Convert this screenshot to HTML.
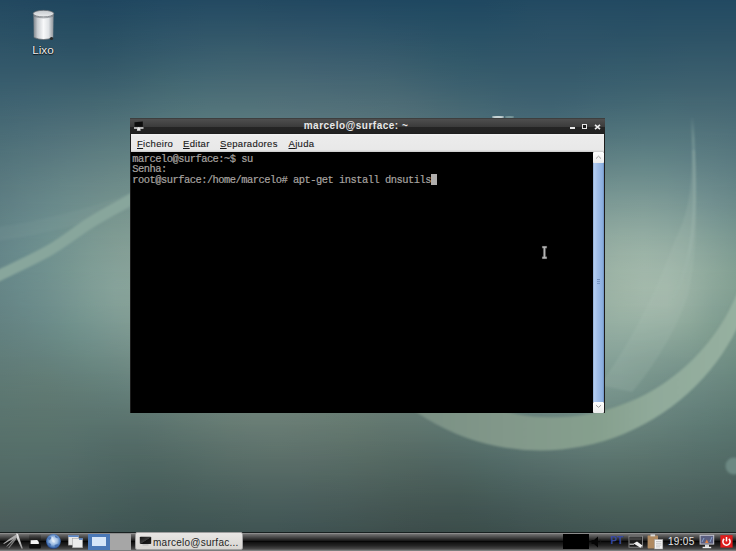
<!DOCTYPE html>
<html><head><meta charset="utf-8">
<style>
html,body{margin:0;padding:0;}
body{width:736px;height:551px;overflow:hidden;position:relative;background:#4f6e70;font-family:"Liberation Sans",sans-serif;}
.abs{position:absolute;}
#wall{position:absolute;left:0;top:0;}
#lixo{left:18px;top:42.8px;width:50px;text-align:center;color:#f0f0f0;font-size:11.7px;line-height:14px;text-shadow:0 0 1px #000,0 1px 1px rgba(0,0,0,.8);}
#win{left:130px;top:118px;width:475px;height:295px;background:#1c1c1c;}
#title{left:130px;top:118px;width:475px;height:16px;background:linear-gradient(#2e2e2e 0,#4e4e4e 1px,#444 5px,#3a3a3a 9px,#242424 9px,#222 15px,#1c1c1c 16px);}
#ttext{left:146px;top:119px;width:420px;text-align:center;color:#e8e8e8;font-weight:bold;font-size:10px;letter-spacing:0.5px;line-height:14px;}
#menubar{left:131px;top:134px;width:473px;height:18px;background:linear-gradient(#f4f4f4 0,#ececec 2px,#e8e8e8 16px,#c8c8c8 18px);}
.mi{top:137.5px;font-size:9.5px;letter-spacing:0.3px;color:#1a1a1a;line-height:12px;-webkit-text-stroke:0.12px #1a1a1a;}
.mi u{text-decoration:underline;text-underline-offset:1px;}
#term{left:130.5px;top:152px;width:462.5px;height:260.8px;background:#000;}
#tt{left:132.2px;top:153.6px;font-family:"Liberation Mono",monospace;font-size:10.4px;letter-spacing:-0.49px;line-height:10.6px;color:#a8a4a0;white-space:pre;-webkit-text-stroke:0.2px #a8a4a0;}
#sbth{left:593px;top:162px;width:11px;height:240px;background:linear-gradient(90deg,#7e9ac4 0,#b4cef2 1px,#a2bee8 40%,#8cb0e0 85%,#6e90c0 100%);}
.sbb svg{display:block}
.sbb{left:593px;width:11px;height:11px;background:linear-gradient(#ffffff,#ececec);border-radius:1px;}
#panel{left:0;top:532px;width:736px;height:19px;background:linear-gradient(#182020 0,#182020 1px,#8c8c8c 1px,#8c8c8c 2px,#6c6c6c 2.5px,#444 5.5px,#1a1a1a 8.5px,#060606 9.5px,#121212 10.5px,#242424 13.5px,#444 16.5px,#5a5a5a 17.5px,#7e7e7e 18.5px);}
#task{left:135px;top:532px;width:106px;height:16px;border:1px solid #a0a0a0;border-radius:2px;background:linear-gradient(#e8e6e4,#d8d6d2);}
#tasktext{left:153px;top:536.5px;font-size:10px;letter-spacing:0.25px;color:#262626;line-height:12px;}
#pt{left:610.5px;top:535.3px;font-size:10.2px;font-weight:bold;color:#3648a0;line-height:12px;}
#clock{left:668px;top:536px;font-size:10px;letter-spacing:0.3px;color:#e8e8e8;line-height:12px;}
</style></head>
<body>
<svg id="wall" width="736" height="551" viewBox="0 0 736 551">
  <defs>
    <filter id="bb" x="-10%" y="-10%" width="120%" height="120%" filterUnits="objectBoundingBox"><feGaussianBlur stdDeviation="10"/></filter>
    <filter id="b1" x="-20%" y="-20%" width="140%" height="140%"><feGaussianBlur stdDeviation="1.2"/></filter>
    </defs>
  <defs><linearGradient id="vg" x1="0" y1="0" x2="0" y2="1"><stop offset="0" stop-color="#fff" stop-opacity="0"/><stop offset="1" stop-color="#fff" stop-opacity="1"/></linearGradient><mask id="vm" maskContentUnits="objectBoundingBox"><rect width="1" height="1" fill="url(#vg)"/></mask><linearGradient id="r0" x1="0" y1="0" x2="736" y2="0" gradientUnits="userSpaceOnUse"><stop offset="0.0000" stop-color="#234960"/><stop offset="0.0312" stop-color="#224860"/><stop offset="0.0625" stop-color="#21475f"/><stop offset="0.0938" stop-color="#20475f"/><stop offset="0.1250" stop-color="#20465f"/><stop offset="0.1562" stop-color="#204760"/><stop offset="0.1875" stop-color="#214861"/><stop offset="0.2188" stop-color="#224962"/><stop offset="0.2500" stop-color="#234a62"/><stop offset="0.2812" stop-color="#244a62"/><stop offset="0.3125" stop-color="#244a62"/><stop offset="0.3438" stop-color="#244a62"/><stop offset="0.3750" stop-color="#234961"/><stop offset="0.4062" stop-color="#224961"/><stop offset="0.4375" stop-color="#224861"/><stop offset="0.4688" stop-color="#214861"/><stop offset="0.5000" stop-color="#214861"/><stop offset="0.5312" stop-color="#204861"/><stop offset="0.5625" stop-color="#1f4861"/><stop offset="0.5938" stop-color="#1f4861"/><stop offset="0.6250" stop-color="#1f4861"/><stop offset="0.6562" stop-color="#204861"/><stop offset="0.6875" stop-color="#214961"/><stop offset="0.7188" stop-color="#224a62"/><stop offset="0.7500" stop-color="#234a62"/><stop offset="0.7812" stop-color="#234a62"/><stop offset="0.8125" stop-color="#234a62"/><stop offset="0.8438" stop-color="#234a62"/><stop offset="0.8750" stop-color="#224a61"/><stop offset="0.9062" stop-color="#224a61"/><stop offset="0.9375" stop-color="#224a62"/><stop offset="0.9688" stop-color="#234a62"/><stop offset="1.0000" stop-color="#234a62"/></linearGradient><linearGradient id="r1" x1="0" y1="0" x2="736" y2="0" gradientUnits="userSpaceOnUse"><stop offset="0.0000" stop-color="#274d63"/><stop offset="0.0312" stop-color="#264c62"/><stop offset="0.0625" stop-color="#254b61"/><stop offset="0.0938" stop-color="#244b61"/><stop offset="0.1250" stop-color="#244a61"/><stop offset="0.1562" stop-color="#254b62"/><stop offset="0.1875" stop-color="#264d63"/><stop offset="0.2188" stop-color="#284e65"/><stop offset="0.2500" stop-color="#294f65"/><stop offset="0.2812" stop-color="#2a5066"/><stop offset="0.3125" stop-color="#2a5066"/><stop offset="0.3438" stop-color="#2a5065"/><stop offset="0.3750" stop-color="#2a4f65"/><stop offset="0.4062" stop-color="#294e65"/><stop offset="0.4375" stop-color="#294e65"/><stop offset="0.4688" stop-color="#284e65"/><stop offset="0.5000" stop-color="#274e65"/><stop offset="0.5312" stop-color="#264d64"/><stop offset="0.5625" stop-color="#254d64"/><stop offset="0.5938" stop-color="#244d63"/><stop offset="0.6250" stop-color="#244c63"/><stop offset="0.6562" stop-color="#244c63"/><stop offset="0.6875" stop-color="#254d64"/><stop offset="0.7188" stop-color="#274e64"/><stop offset="0.7500" stop-color="#284e65"/><stop offset="0.7812" stop-color="#284e65"/><stop offset="0.8125" stop-color="#274e64"/><stop offset="0.8438" stop-color="#274e64"/><stop offset="0.8750" stop-color="#274d64"/><stop offset="0.9062" stop-color="#274e64"/><stop offset="0.9375" stop-color="#274e64"/><stop offset="0.9688" stop-color="#274e64"/><stop offset="1.0000" stop-color="#274e64"/></linearGradient><linearGradient id="r2" x1="0" y1="0" x2="736" y2="0" gradientUnits="userSpaceOnUse"><stop offset="0.0000" stop-color="#2b5165"/><stop offset="0.0312" stop-color="#2a5065"/><stop offset="0.0625" stop-color="#2a4f64"/><stop offset="0.0938" stop-color="#294f63"/><stop offset="0.1250" stop-color="#294f63"/><stop offset="0.1562" stop-color="#2a5064"/><stop offset="0.1875" stop-color="#2c5266"/><stop offset="0.2188" stop-color="#2e5468"/><stop offset="0.2500" stop-color="#305569"/><stop offset="0.2812" stop-color="#315669"/><stop offset="0.3125" stop-color="#315669"/><stop offset="0.3438" stop-color="#325669"/><stop offset="0.3750" stop-color="#315569"/><stop offset="0.4062" stop-color="#315569"/><stop offset="0.4375" stop-color="#305469"/><stop offset="0.4688" stop-color="#2f5469"/><stop offset="0.5000" stop-color="#2e5468"/><stop offset="0.5312" stop-color="#2d5368"/><stop offset="0.5625" stop-color="#2c5267"/><stop offset="0.5938" stop-color="#2a5166"/><stop offset="0.6250" stop-color="#295166"/><stop offset="0.6562" stop-color="#295166"/><stop offset="0.6875" stop-color="#2a5166"/><stop offset="0.7188" stop-color="#2b5166"/><stop offset="0.7500" stop-color="#2c5267"/><stop offset="0.7812" stop-color="#2c5267"/><stop offset="0.8125" stop-color="#2c5266"/><stop offset="0.8438" stop-color="#2b5166"/><stop offset="0.8750" stop-color="#2b5266"/><stop offset="0.9062" stop-color="#2c5266"/><stop offset="0.9375" stop-color="#2c5266"/><stop offset="0.9688" stop-color="#2d5266"/><stop offset="1.0000" stop-color="#2d5266"/></linearGradient><linearGradient id="r3" x1="0" y1="0" x2="736" y2="0" gradientUnits="userSpaceOnUse"><stop offset="0.0000" stop-color="#305568"/><stop offset="0.0312" stop-color="#2f5567"/><stop offset="0.0625" stop-color="#2f5467"/><stop offset="0.0938" stop-color="#2e5366"/><stop offset="0.1250" stop-color="#2e5366"/><stop offset="0.1562" stop-color="#2f5567"/><stop offset="0.1875" stop-color="#325769"/><stop offset="0.2188" stop-color="#34596b"/><stop offset="0.2500" stop-color="#365b6c"/><stop offset="0.2812" stop-color="#385c6d"/><stop offset="0.3125" stop-color="#395d6d"/><stop offset="0.3438" stop-color="#395d6d"/><stop offset="0.3750" stop-color="#395c6d"/><stop offset="0.4062" stop-color="#395b6d"/><stop offset="0.4375" stop-color="#385b6d"/><stop offset="0.4688" stop-color="#375a6d"/><stop offset="0.5000" stop-color="#365a6c"/><stop offset="0.5312" stop-color="#35596b"/><stop offset="0.5625" stop-color="#33586a"/><stop offset="0.5938" stop-color="#305769"/><stop offset="0.6250" stop-color="#2f5668"/><stop offset="0.6562" stop-color="#2e5568"/><stop offset="0.6875" stop-color="#2f5568"/><stop offset="0.7188" stop-color="#2f5569"/><stop offset="0.7500" stop-color="#305569"/><stop offset="0.7812" stop-color="#305569"/><stop offset="0.8125" stop-color="#305569"/><stop offset="0.8438" stop-color="#305669"/><stop offset="0.8750" stop-color="#305668"/><stop offset="0.9062" stop-color="#315669"/><stop offset="0.9375" stop-color="#325769"/><stop offset="0.9688" stop-color="#325769"/><stop offset="1.0000" stop-color="#325769"/></linearGradient><linearGradient id="r4" x1="0" y1="0" x2="736" y2="0" gradientUnits="userSpaceOnUse"><stop offset="0.0000" stop-color="#34596b"/><stop offset="0.0312" stop-color="#34596b"/><stop offset="0.0625" stop-color="#34596a"/><stop offset="0.0938" stop-color="#34596a"/><stop offset="0.1250" stop-color="#345969"/><stop offset="0.1562" stop-color="#365a6a"/><stop offset="0.1875" stop-color="#385d6c"/><stop offset="0.2188" stop-color="#3b606e"/><stop offset="0.2500" stop-color="#3d6270"/><stop offset="0.2812" stop-color="#3f6371"/><stop offset="0.3125" stop-color="#406471"/><stop offset="0.3438" stop-color="#416371"/><stop offset="0.3750" stop-color="#416371"/><stop offset="0.4062" stop-color="#416271"/><stop offset="0.4375" stop-color="#406171"/><stop offset="0.4688" stop-color="#3f6170"/><stop offset="0.5000" stop-color="#3e6070"/><stop offset="0.5312" stop-color="#3d5f6f"/><stop offset="0.5625" stop-color="#3a5e6d"/><stop offset="0.5938" stop-color="#375c6c"/><stop offset="0.6250" stop-color="#355b6b"/><stop offset="0.6562" stop-color="#345a6b"/><stop offset="0.6875" stop-color="#34596b"/><stop offset="0.7188" stop-color="#34596b"/><stop offset="0.7500" stop-color="#34596b"/><stop offset="0.7812" stop-color="#34596b"/><stop offset="0.8125" stop-color="#355a6b"/><stop offset="0.8438" stop-color="#355b6c"/><stop offset="0.8750" stop-color="#365b6b"/><stop offset="0.9062" stop-color="#375b6c"/><stop offset="0.9375" stop-color="#385c6c"/><stop offset="0.9688" stop-color="#385c6c"/><stop offset="1.0000" stop-color="#385b6c"/></linearGradient><linearGradient id="r5" x1="0" y1="0" x2="736" y2="0" gradientUnits="userSpaceOnUse"><stop offset="0.0000" stop-color="#395e6e"/><stop offset="0.0312" stop-color="#3a5e6e"/><stop offset="0.0625" stop-color="#3b5f6e"/><stop offset="0.0938" stop-color="#3b5f6e"/><stop offset="0.1250" stop-color="#3c606e"/><stop offset="0.1562" stop-color="#3d616f"/><stop offset="0.1875" stop-color="#406470"/><stop offset="0.2188" stop-color="#436772"/><stop offset="0.2500" stop-color="#456974"/><stop offset="0.2812" stop-color="#476a75"/><stop offset="0.3125" stop-color="#486a75"/><stop offset="0.3438" stop-color="#496a75"/><stop offset="0.3750" stop-color="#496a75"/><stop offset="0.4062" stop-color="#496975"/><stop offset="0.4375" stop-color="#486875"/><stop offset="0.4688" stop-color="#476774"/><stop offset="0.5000" stop-color="#466773"/><stop offset="0.5312" stop-color="#456672"/><stop offset="0.5625" stop-color="#426471"/><stop offset="0.5938" stop-color="#3f6270"/><stop offset="0.6250" stop-color="#3c606f"/><stop offset="0.6562" stop-color="#3b5f6e"/><stop offset="0.6875" stop-color="#395e6e"/><stop offset="0.7188" stop-color="#395d6e"/><stop offset="0.7500" stop-color="#395d6e"/><stop offset="0.7812" stop-color="#395e6e"/><stop offset="0.8125" stop-color="#3a5f6f"/><stop offset="0.8438" stop-color="#3b606f"/><stop offset="0.8750" stop-color="#3c616f"/><stop offset="0.9062" stop-color="#3d616f"/><stop offset="0.9375" stop-color="#3e616f"/><stop offset="0.9688" stop-color="#3e616f"/><stop offset="1.0000" stop-color="#3e616f"/></linearGradient><linearGradient id="r6" x1="0" y1="0" x2="736" y2="0" gradientUnits="userSpaceOnUse"><stop offset="0.0000" stop-color="#3f6371"/><stop offset="0.0312" stop-color="#406472"/><stop offset="0.0625" stop-color="#416572"/><stop offset="0.0938" stop-color="#436672"/><stop offset="0.1250" stop-color="#446772"/><stop offset="0.1562" stop-color="#466973"/><stop offset="0.1875" stop-color="#486b75"/><stop offset="0.2188" stop-color="#4b6e77"/><stop offset="0.2500" stop-color="#4d7078"/><stop offset="0.2812" stop-color="#4f7179"/><stop offset="0.3125" stop-color="#507179"/><stop offset="0.3438" stop-color="#507179"/><stop offset="0.3750" stop-color="#517079"/><stop offset="0.4062" stop-color="#506f79"/><stop offset="0.4375" stop-color="#506f78"/><stop offset="0.4688" stop-color="#4f6e78"/><stop offset="0.5000" stop-color="#4e6d77"/><stop offset="0.5312" stop-color="#4d6c76"/><stop offset="0.5625" stop-color="#4b6a75"/><stop offset="0.5938" stop-color="#476873"/><stop offset="0.6250" stop-color="#446672"/><stop offset="0.6562" stop-color="#426572"/><stop offset="0.6875" stop-color="#406371"/><stop offset="0.7188" stop-color="#3f6271"/><stop offset="0.7500" stop-color="#3e6271"/><stop offset="0.7812" stop-color="#3f6372"/><stop offset="0.8125" stop-color="#416573"/><stop offset="0.8438" stop-color="#426673"/><stop offset="0.8750" stop-color="#436773"/><stop offset="0.9062" stop-color="#446874"/><stop offset="0.9375" stop-color="#456773"/><stop offset="0.9688" stop-color="#456773"/><stop offset="1.0000" stop-color="#446673"/></linearGradient><linearGradient id="r7" x1="0" y1="0" x2="736" y2="0" gradientUnits="userSpaceOnUse"><stop offset="0.0000" stop-color="#456874"/><stop offset="0.0312" stop-color="#476975"/><stop offset="0.0625" stop-color="#496b76"/><stop offset="0.0938" stop-color="#4b6c77"/><stop offset="0.1250" stop-color="#4c6e77"/><stop offset="0.1562" stop-color="#4e7078"/><stop offset="0.1875" stop-color="#517279"/><stop offset="0.2188" stop-color="#53757b"/><stop offset="0.2500" stop-color="#55777c"/><stop offset="0.2812" stop-color="#57787d"/><stop offset="0.3125" stop-color="#57787d"/><stop offset="0.3438" stop-color="#58787d"/><stop offset="0.3750" stop-color="#58777d"/><stop offset="0.4062" stop-color="#58767d"/><stop offset="0.4375" stop-color="#57757c"/><stop offset="0.4688" stop-color="#57747b"/><stop offset="0.5000" stop-color="#56737a"/><stop offset="0.5312" stop-color="#547279"/><stop offset="0.5625" stop-color="#527078"/><stop offset="0.5938" stop-color="#4f6e77"/><stop offset="0.6250" stop-color="#4c6c76"/><stop offset="0.6562" stop-color="#496b76"/><stop offset="0.6875" stop-color="#476975"/><stop offset="0.7188" stop-color="#466875"/><stop offset="0.7500" stop-color="#456875"/><stop offset="0.7812" stop-color="#476a76"/><stop offset="0.8125" stop-color="#496c77"/><stop offset="0.8438" stop-color="#4a6e78"/><stop offset="0.8750" stop-color="#4b6f78"/><stop offset="0.9062" stop-color="#4c6f78"/><stop offset="0.9375" stop-color="#4c6e78"/><stop offset="0.9688" stop-color="#4c6d77"/><stop offset="1.0000" stop-color="#4a6c77"/></linearGradient><linearGradient id="r8" x1="0" y1="0" x2="736" y2="0" gradientUnits="userSpaceOnUse"><stop offset="0.0000" stop-color="#4b6d77"/><stop offset="0.0312" stop-color="#4d6f79"/><stop offset="0.0625" stop-color="#50717a"/><stop offset="0.0938" stop-color="#53737b"/><stop offset="0.1250" stop-color="#55757c"/><stop offset="0.1562" stop-color="#57787d"/><stop offset="0.1875" stop-color="#597a7e"/><stop offset="0.2188" stop-color="#5b7c7f"/><stop offset="0.2500" stop-color="#5d7e80"/><stop offset="0.2812" stop-color="#5e7f81"/><stop offset="0.3125" stop-color="#5f7f81"/><stop offset="0.3438" stop-color="#5f7e81"/><stop offset="0.3750" stop-color="#5f7d81"/><stop offset="0.4062" stop-color="#5f7c80"/><stop offset="0.4375" stop-color="#5f7b7f"/><stop offset="0.4688" stop-color="#5e7a7f"/><stop offset="0.5000" stop-color="#5d797e"/><stop offset="0.5312" stop-color="#5b787d"/><stop offset="0.5625" stop-color="#59767c"/><stop offset="0.5938" stop-color="#56747b"/><stop offset="0.6250" stop-color="#54737a"/><stop offset="0.6562" stop-color="#51717a"/><stop offset="0.6875" stop-color="#50707a"/><stop offset="0.7188" stop-color="#4e707a"/><stop offset="0.7500" stop-color="#4e707a"/><stop offset="0.7812" stop-color="#50727b"/><stop offset="0.8125" stop-color="#52747c"/><stop offset="0.8438" stop-color="#53767d"/><stop offset="0.8750" stop-color="#54777e"/><stop offset="0.9062" stop-color="#54777e"/><stop offset="0.9375" stop-color="#54767d"/><stop offset="0.9688" stop-color="#53747c"/><stop offset="1.0000" stop-color="#51727b"/></linearGradient><linearGradient id="r9" x1="0" y1="0" x2="736" y2="0" gradientUnits="userSpaceOnUse"><stop offset="0.0000" stop-color="#50727a"/><stop offset="0.0312" stop-color="#54757c"/><stop offset="0.0625" stop-color="#57777e"/><stop offset="0.0938" stop-color="#5a7a80"/><stop offset="0.1250" stop-color="#5d7d81"/><stop offset="0.1562" stop-color="#5f7f82"/><stop offset="0.1875" stop-color="#618183"/><stop offset="0.2188" stop-color="#638383"/><stop offset="0.2500" stop-color="#658484"/><stop offset="0.2812" stop-color="#668585"/><stop offset="0.3125" stop-color="#668585"/><stop offset="0.3438" stop-color="#668485"/><stop offset="0.3750" stop-color="#668384"/><stop offset="0.4062" stop-color="#668283"/><stop offset="0.4375" stop-color="#658083"/><stop offset="0.4688" stop-color="#647f82"/><stop offset="0.5000" stop-color="#637e81"/><stop offset="0.5312" stop-color="#627d80"/><stop offset="0.5625" stop-color="#607c7f"/><stop offset="0.5938" stop-color="#5d7a7f"/><stop offset="0.6250" stop-color="#5b797e"/><stop offset="0.6562" stop-color="#59787e"/><stop offset="0.6875" stop-color="#58777e"/><stop offset="0.7188" stop-color="#58787f"/><stop offset="0.7500" stop-color="#587980"/><stop offset="0.7812" stop-color="#5a7b81"/><stop offset="0.8125" stop-color="#5c7d82"/><stop offset="0.8438" stop-color="#5d7f83"/><stop offset="0.8750" stop-color="#5e8084"/><stop offset="0.9062" stop-color="#5d7f83"/><stop offset="0.9375" stop-color="#5c7d83"/><stop offset="0.9688" stop-color="#5a7b81"/><stop offset="1.0000" stop-color="#57787f"/></linearGradient><linearGradient id="r10" x1="0" y1="0" x2="736" y2="0" gradientUnits="userSpaceOnUse"><stop offset="0.0000" stop-color="#56767d"/><stop offset="0.0312" stop-color="#597a80"/><stop offset="0.0625" stop-color="#5d7d82"/><stop offset="0.0938" stop-color="#618184"/><stop offset="0.1250" stop-color="#648385"/><stop offset="0.1562" stop-color="#678686"/><stop offset="0.1875" stop-color="#698887"/><stop offset="0.2188" stop-color="#6b8988"/><stop offset="0.2500" stop-color="#6c8a88"/><stop offset="0.2812" stop-color="#6d8b88"/><stop offset="0.3125" stop-color="#6d8a88"/><stop offset="0.3438" stop-color="#6d8988"/><stop offset="0.3750" stop-color="#6d8887"/><stop offset="0.4062" stop-color="#6c8786"/><stop offset="0.4375" stop-color="#6b8686"/><stop offset="0.4688" stop-color="#6a8485"/><stop offset="0.5000" stop-color="#698384"/><stop offset="0.5312" stop-color="#678283"/><stop offset="0.5625" stop-color="#668183"/><stop offset="0.5938" stop-color="#648082"/><stop offset="0.6250" stop-color="#627f82"/><stop offset="0.6562" stop-color="#617f82"/><stop offset="0.6875" stop-color="#617f83"/><stop offset="0.7188" stop-color="#618084"/><stop offset="0.7500" stop-color="#628185"/><stop offset="0.7812" stop-color="#648487"/><stop offset="0.8125" stop-color="#668688"/><stop offset="0.8438" stop-color="#688889"/><stop offset="0.8750" stop-color="#68898a"/><stop offset="0.9062" stop-color="#67888a"/><stop offset="0.9375" stop-color="#658588"/><stop offset="0.9688" stop-color="#628286"/><stop offset="1.0000" stop-color="#5e7e83"/></linearGradient><linearGradient id="r11" x1="0" y1="0" x2="736" y2="0" gradientUnits="userSpaceOnUse"><stop offset="0.0000" stop-color="#5a7a80"/><stop offset="0.0312" stop-color="#5f7f83"/><stop offset="0.0625" stop-color="#638386"/><stop offset="0.0938" stop-color="#678788"/><stop offset="0.1250" stop-color="#6b8989"/><stop offset="0.1562" stop-color="#6e8c8a"/><stop offset="0.1875" stop-color="#708e8b"/><stop offset="0.2188" stop-color="#728f8b"/><stop offset="0.2500" stop-color="#73908c"/><stop offset="0.2812" stop-color="#73908c"/><stop offset="0.3125" stop-color="#738f8b"/><stop offset="0.3438" stop-color="#738e8b"/><stop offset="0.3750" stop-color="#728d8a"/><stop offset="0.4062" stop-color="#718c89"/><stop offset="0.4375" stop-color="#708a88"/><stop offset="0.4688" stop-color="#6f8987"/><stop offset="0.5000" stop-color="#6e8887"/><stop offset="0.5312" stop-color="#6d8786"/><stop offset="0.5625" stop-color="#6b8686"/><stop offset="0.5938" stop-color="#6a8585"/><stop offset="0.6250" stop-color="#698586"/><stop offset="0.6562" stop-color="#698586"/><stop offset="0.6875" stop-color="#698687"/><stop offset="0.7188" stop-color="#6a8789"/><stop offset="0.7500" stop-color="#6c8a8b"/><stop offset="0.7812" stop-color="#6f8d8d"/><stop offset="0.8125" stop-color="#71908f"/><stop offset="0.8438" stop-color="#739290"/><stop offset="0.8750" stop-color="#739290"/><stop offset="0.9062" stop-color="#729190"/><stop offset="0.9375" stop-color="#6e8d8e"/><stop offset="0.9688" stop-color="#6a898b"/><stop offset="1.0000" stop-color="#658587"/></linearGradient><linearGradient id="r12" x1="0" y1="0" x2="736" y2="0" gradientUnits="userSpaceOnUse"><stop offset="0.0000" stop-color="#5e7e83"/><stop offset="0.0312" stop-color="#638387"/><stop offset="0.0625" stop-color="#67888a"/><stop offset="0.0938" stop-color="#6c8c8c"/><stop offset="0.1250" stop-color="#708f8d"/><stop offset="0.1562" stop-color="#74928d"/><stop offset="0.1875" stop-color="#77948e"/><stop offset="0.2188" stop-color="#78958f"/><stop offset="0.2500" stop-color="#79958f"/><stop offset="0.2812" stop-color="#79958f"/><stop offset="0.3125" stop-color="#79948e"/><stop offset="0.3438" stop-color="#78928d"/><stop offset="0.3750" stop-color="#77918c"/><stop offset="0.4062" stop-color="#76908b"/><stop offset="0.4375" stop-color="#758e8a"/><stop offset="0.4688" stop-color="#748d89"/><stop offset="0.5000" stop-color="#738c89"/><stop offset="0.5312" stop-color="#718b88"/><stop offset="0.5625" stop-color="#708a88"/><stop offset="0.5938" stop-color="#708a88"/><stop offset="0.6250" stop-color="#6f8a89"/><stop offset="0.6562" stop-color="#6f8b8a"/><stop offset="0.6875" stop-color="#718c8b"/><stop offset="0.7188" stop-color="#738f8d"/><stop offset="0.7500" stop-color="#759290"/><stop offset="0.7812" stop-color="#799592"/><stop offset="0.8125" stop-color="#7c9995"/><stop offset="0.8438" stop-color="#7e9b96"/><stop offset="0.8750" stop-color="#7f9c97"/><stop offset="0.9062" stop-color="#7d9a96"/><stop offset="0.9375" stop-color="#789693"/><stop offset="0.9688" stop-color="#729090"/><stop offset="1.0000" stop-color="#6c8b8b"/></linearGradient><linearGradient id="r13" x1="0" y1="0" x2="736" y2="0" gradientUnits="userSpaceOnUse"><stop offset="0.0000" stop-color="#618285"/><stop offset="0.0312" stop-color="#66878a"/><stop offset="0.0625" stop-color="#6b8c8d"/><stop offset="0.0938" stop-color="#70908e"/><stop offset="0.1250" stop-color="#76948f"/><stop offset="0.1562" stop-color="#7a9790"/><stop offset="0.1875" stop-color="#7d9891"/><stop offset="0.2188" stop-color="#7e9992"/><stop offset="0.2500" stop-color="#7f9992"/><stop offset="0.2812" stop-color="#7e9991"/><stop offset="0.3125" stop-color="#7e9790"/><stop offset="0.3438" stop-color="#7d968f"/><stop offset="0.3750" stop-color="#7b948e"/><stop offset="0.4062" stop-color="#7a938d"/><stop offset="0.4375" stop-color="#79918c"/><stop offset="0.4688" stop-color="#78908b"/><stop offset="0.5000" stop-color="#778f8a"/><stop offset="0.5312" stop-color="#768e8a"/><stop offset="0.5625" stop-color="#758e8a"/><stop offset="0.5938" stop-color="#748e8b"/><stop offset="0.6250" stop-color="#758f8c"/><stop offset="0.6562" stop-color="#76908d"/><stop offset="0.6875" stop-color="#77928f"/><stop offset="0.7188" stop-color="#7a9591"/><stop offset="0.7500" stop-color="#7e9994"/><stop offset="0.7812" stop-color="#829d97"/><stop offset="0.8125" stop-color="#86a19a"/><stop offset="0.8438" stop-color="#89a49c"/><stop offset="0.8750" stop-color="#8aa59d"/><stop offset="0.9062" stop-color="#87a39c"/><stop offset="0.9375" stop-color="#829e98"/><stop offset="0.9688" stop-color="#7a9894"/><stop offset="1.0000" stop-color="#73928e"/></linearGradient><linearGradient id="r14" x1="0" y1="0" x2="736" y2="0" gradientUnits="userSpaceOnUse"><stop offset="0.0000" stop-color="#648488"/><stop offset="0.0312" stop-color="#698a8c"/><stop offset="0.0625" stop-color="#6e908f"/><stop offset="0.0938" stop-color="#749490"/><stop offset="0.1250" stop-color="#7a9892"/><stop offset="0.1562" stop-color="#7f9b93"/><stop offset="0.1875" stop-color="#829d94"/><stop offset="0.2188" stop-color="#839d94"/><stop offset="0.2500" stop-color="#839d94"/><stop offset="0.2812" stop-color="#829c93"/><stop offset="0.3125" stop-color="#819a92"/><stop offset="0.3438" stop-color="#809991"/><stop offset="0.3750" stop-color="#7f978f"/><stop offset="0.4062" stop-color="#7d958e"/><stop offset="0.4375" stop-color="#7c948d"/><stop offset="0.4688" stop-color="#7b938c"/><stop offset="0.5000" stop-color="#7a928c"/><stop offset="0.5312" stop-color="#79918c"/><stop offset="0.5625" stop-color="#78918c"/><stop offset="0.5938" stop-color="#78918d"/><stop offset="0.6250" stop-color="#79928e"/><stop offset="0.6562" stop-color="#7a9490"/><stop offset="0.6875" stop-color="#7d9792"/><stop offset="0.7188" stop-color="#809b95"/><stop offset="0.7500" stop-color="#859f98"/><stop offset="0.7812" stop-color="#8aa39b"/><stop offset="0.8125" stop-color="#8fa89f"/><stop offset="0.8438" stop-color="#93aca1"/><stop offset="0.8750" stop-color="#94ada3"/><stop offset="0.9062" stop-color="#91aba1"/><stop offset="0.9375" stop-color="#8ba69d"/><stop offset="0.9688" stop-color="#829f97"/><stop offset="1.0000" stop-color="#7a9891"/></linearGradient><linearGradient id="r15" x1="0" y1="0" x2="736" y2="0" gradientUnits="userSpaceOnUse"><stop offset="0.0000" stop-color="#658689"/><stop offset="0.0312" stop-color="#6a8c8d"/><stop offset="0.0625" stop-color="#70918f"/><stop offset="0.0938" stop-color="#769591"/><stop offset="0.1250" stop-color="#7d9b94"/><stop offset="0.1562" stop-color="#839e96"/><stop offset="0.1875" stop-color="#86a097"/><stop offset="0.2188" stop-color="#86a097"/><stop offset="0.2500" stop-color="#869f96"/><stop offset="0.2812" stop-color="#859e94"/><stop offset="0.3125" stop-color="#849c93"/><stop offset="0.3438" stop-color="#839b91"/><stop offset="0.3750" stop-color="#819990"/><stop offset="0.4062" stop-color="#80978f"/><stop offset="0.4375" stop-color="#7e968e"/><stop offset="0.4688" stop-color="#7d948d"/><stop offset="0.5000" stop-color="#7c938c"/><stop offset="0.5312" stop-color="#7b938c"/><stop offset="0.5625" stop-color="#7b938d"/><stop offset="0.5938" stop-color="#7b948e"/><stop offset="0.6250" stop-color="#7c958f"/><stop offset="0.6562" stop-color="#7e9891"/><stop offset="0.6875" stop-color="#819b94"/><stop offset="0.7188" stop-color="#859f97"/><stop offset="0.7500" stop-color="#8aa39b"/><stop offset="0.7812" stop-color="#8fa89e"/><stop offset="0.8125" stop-color="#95ada2"/><stop offset="0.8438" stop-color="#9ab1a5"/><stop offset="0.8750" stop-color="#9cb4a7"/><stop offset="0.9062" stop-color="#9ab1a6"/><stop offset="0.9375" stop-color="#92aca1"/><stop offset="0.9688" stop-color="#89a49a"/><stop offset="1.0000" stop-color="#7f9d93"/></linearGradient><linearGradient id="r16" x1="0" y1="0" x2="736" y2="0" gradientUnits="userSpaceOnUse"><stop offset="0.0000" stop-color="#668688"/><stop offset="0.0312" stop-color="#6b8c8c"/><stop offset="0.0625" stop-color="#70918f"/><stop offset="0.0938" stop-color="#779791"/><stop offset="0.1250" stop-color="#7f9d96"/><stop offset="0.1562" stop-color="#85a199"/><stop offset="0.1875" stop-color="#88a299"/><stop offset="0.2188" stop-color="#88a298"/><stop offset="0.2500" stop-color="#88a196"/><stop offset="0.2812" stop-color="#879f95"/><stop offset="0.3125" stop-color="#859d93"/><stop offset="0.3438" stop-color="#849b91"/><stop offset="0.3750" stop-color="#839a90"/><stop offset="0.4062" stop-color="#81988f"/><stop offset="0.4375" stop-color="#80968e"/><stop offset="0.4688" stop-color="#7e958d"/><stop offset="0.5000" stop-color="#7d948c"/><stop offset="0.5312" stop-color="#7d948c"/><stop offset="0.5625" stop-color="#7c948d"/><stop offset="0.5938" stop-color="#7d958e"/><stop offset="0.6250" stop-color="#7e9790"/><stop offset="0.6562" stop-color="#819a92"/><stop offset="0.6875" stop-color="#849d95"/><stop offset="0.7188" stop-color="#88a199"/><stop offset="0.7500" stop-color="#8da69c"/><stop offset="0.7812" stop-color="#93aba0"/><stop offset="0.8125" stop-color="#99b0a4"/><stop offset="0.8438" stop-color="#9eb5a7"/><stop offset="0.8750" stop-color="#a1b7aa"/><stop offset="0.9062" stop-color="#9fb6a9"/><stop offset="0.9375" stop-color="#97b0a3"/><stop offset="0.9688" stop-color="#8da89b"/><stop offset="1.0000" stop-color="#83a093"/></linearGradient><linearGradient id="r17" x1="0" y1="0" x2="736" y2="0" gradientUnits="userSpaceOnUse"><stop offset="0.0000" stop-color="#668687"/><stop offset="0.0312" stop-color="#6a8b8b"/><stop offset="0.0625" stop-color="#70908e"/><stop offset="0.0938" stop-color="#779692"/><stop offset="0.1250" stop-color="#7f9d96"/><stop offset="0.1562" stop-color="#86a29a"/><stop offset="0.1875" stop-color="#88a399"/><stop offset="0.2188" stop-color="#88a298"/><stop offset="0.2500" stop-color="#88a096"/><stop offset="0.2812" stop-color="#879f94"/><stop offset="0.3125" stop-color="#869d92"/><stop offset="0.3438" stop-color="#849b91"/><stop offset="0.3750" stop-color="#83998f"/><stop offset="0.4062" stop-color="#82988e"/><stop offset="0.4375" stop-color="#80968d"/><stop offset="0.4688" stop-color="#7f958c"/><stop offset="0.5000" stop-color="#7e948c"/><stop offset="0.5312" stop-color="#7d948c"/><stop offset="0.5625" stop-color="#7d958d"/><stop offset="0.5938" stop-color="#7e968e"/><stop offset="0.6250" stop-color="#7f9890"/><stop offset="0.6562" stop-color="#829a93"/><stop offset="0.6875" stop-color="#859e96"/><stop offset="0.7188" stop-color="#8aa299"/><stop offset="0.7500" stop-color="#8fa79d"/><stop offset="0.7812" stop-color="#94aca1"/><stop offset="0.8125" stop-color="#9ab1a4"/><stop offset="0.8438" stop-color="#9fb5a7"/><stop offset="0.8750" stop-color="#a3b9ab"/><stop offset="0.9062" stop-color="#a2b8aa"/><stop offset="0.9375" stop-color="#98b0a3"/><stop offset="0.9688" stop-color="#8ca79a"/><stop offset="1.0000" stop-color="#83a092"/></linearGradient><linearGradient id="r18" x1="0" y1="0" x2="736" y2="0" gradientUnits="userSpaceOnUse"><stop offset="0.0000" stop-color="#658485"/><stop offset="0.0312" stop-color="#698989"/><stop offset="0.0625" stop-color="#6e8e8c"/><stop offset="0.0938" stop-color="#759490"/><stop offset="0.1250" stop-color="#7c9b94"/><stop offset="0.1562" stop-color="#839f97"/><stop offset="0.1875" stop-color="#86a097"/><stop offset="0.2188" stop-color="#86a096"/><stop offset="0.2500" stop-color="#869e94"/><stop offset="0.2812" stop-color="#869d93"/><stop offset="0.3125" stop-color="#859c91"/><stop offset="0.3438" stop-color="#849a8f"/><stop offset="0.3750" stop-color="#83988e"/><stop offset="0.4062" stop-color="#81978d"/><stop offset="0.4375" stop-color="#80968b"/><stop offset="0.4688" stop-color="#7e948b"/><stop offset="0.5000" stop-color="#7d948a"/><stop offset="0.5312" stop-color="#7d938b"/><stop offset="0.5625" stop-color="#7c948b"/><stop offset="0.5938" stop-color="#7d958d"/><stop offset="0.6250" stop-color="#7f978f"/><stop offset="0.6562" stop-color="#819a92"/><stop offset="0.6875" stop-color="#859e95"/><stop offset="0.7188" stop-color="#89a299"/><stop offset="0.7500" stop-color="#8ea79c"/><stop offset="0.7812" stop-color="#93aca0"/><stop offset="0.8125" stop-color="#98b0a3"/><stop offset="0.8438" stop-color="#9db4a6"/><stop offset="0.8750" stop-color="#a0b6a9"/><stop offset="0.9062" stop-color="#9fb5a8"/><stop offset="0.9375" stop-color="#94ada0"/><stop offset="0.9688" stop-color="#87a397"/><stop offset="1.0000" stop-color="#7f9c90"/></linearGradient><linearGradient id="r19" x1="0" y1="0" x2="736" y2="0" gradientUnits="userSpaceOnUse"><stop offset="0.0000" stop-color="#648282"/><stop offset="0.0312" stop-color="#678685"/><stop offset="0.0625" stop-color="#6b8b89"/><stop offset="0.0938" stop-color="#70918c"/><stop offset="0.1250" stop-color="#779690"/><stop offset="0.1562" stop-color="#7d9a93"/><stop offset="0.1875" stop-color="#819c93"/><stop offset="0.2188" stop-color="#829c93"/><stop offset="0.2500" stop-color="#839b91"/><stop offset="0.2812" stop-color="#839a90"/><stop offset="0.3125" stop-color="#83998e"/><stop offset="0.3438" stop-color="#82988d"/><stop offset="0.3750" stop-color="#81968c"/><stop offset="0.4062" stop-color="#80958a"/><stop offset="0.4375" stop-color="#7e9489"/><stop offset="0.4688" stop-color="#7d9389"/><stop offset="0.5000" stop-color="#7c9288"/><stop offset="0.5312" stop-color="#7b9289"/><stop offset="0.5625" stop-color="#7b9289"/><stop offset="0.5938" stop-color="#7b938b"/><stop offset="0.6250" stop-color="#7d958d"/><stop offset="0.6562" stop-color="#7f9890"/><stop offset="0.6875" stop-color="#839c93"/><stop offset="0.7188" stop-color="#87a097"/><stop offset="0.7500" stop-color="#8ca59b"/><stop offset="0.7812" stop-color="#90a99e"/><stop offset="0.8125" stop-color="#94ada1"/><stop offset="0.8438" stop-color="#97b0a3"/><stop offset="0.8750" stop-color="#98b1a4"/><stop offset="0.9062" stop-color="#95aea1"/><stop offset="0.9375" stop-color="#8da89a"/><stop offset="0.9688" stop-color="#829f92"/><stop offset="1.0000" stop-color="#7a988c"/></linearGradient><linearGradient id="r20" x1="0" y1="0" x2="736" y2="0" gradientUnits="userSpaceOnUse"><stop offset="0.0000" stop-color="#62807e"/><stop offset="0.0312" stop-color="#658381"/><stop offset="0.0625" stop-color="#688784"/><stop offset="0.0938" stop-color="#6c8c87"/><stop offset="0.1250" stop-color="#71908b"/><stop offset="0.1562" stop-color="#77938d"/><stop offset="0.1875" stop-color="#7a968e"/><stop offset="0.2188" stop-color="#7d968e"/><stop offset="0.2500" stop-color="#7e968d"/><stop offset="0.2812" stop-color="#7f968c"/><stop offset="0.3125" stop-color="#80968b"/><stop offset="0.3438" stop-color="#7f958a"/><stop offset="0.3750" stop-color="#7f9489"/><stop offset="0.4062" stop-color="#7e9288"/><stop offset="0.4375" stop-color="#7c9187"/><stop offset="0.4688" stop-color="#7b9086"/><stop offset="0.5000" stop-color="#7a8f86"/><stop offset="0.5312" stop-color="#798f86"/><stop offset="0.5625" stop-color="#789087"/><stop offset="0.5938" stop-color="#799188"/><stop offset="0.6250" stop-color="#7a938a"/><stop offset="0.6562" stop-color="#7c968d"/><stop offset="0.6875" stop-color="#809991"/><stop offset="0.7188" stop-color="#849d94"/><stop offset="0.7500" stop-color="#88a198"/><stop offset="0.7812" stop-color="#8ba59b"/><stop offset="0.8125" stop-color="#8ea89d"/><stop offset="0.8438" stop-color="#8fa99e"/><stop offset="0.8750" stop-color="#8da89c"/><stop offset="0.9062" stop-color="#8aa599"/><stop offset="0.9375" stop-color="#84a094"/><stop offset="0.9688" stop-color="#7d9a8d"/><stop offset="1.0000" stop-color="#759388"/></linearGradient><linearGradient id="r21" x1="0" y1="0" x2="736" y2="0" gradientUnits="userSpaceOnUse"><stop offset="0.0000" stop-color="#617d7a"/><stop offset="0.0312" stop-color="#637f7c"/><stop offset="0.0625" stop-color="#65827e"/><stop offset="0.0938" stop-color="#688681"/><stop offset="0.1250" stop-color="#6c8a84"/><stop offset="0.1562" stop-color="#708c86"/><stop offset="0.1875" stop-color="#748f87"/><stop offset="0.2188" stop-color="#779088"/><stop offset="0.2500" stop-color="#799188"/><stop offset="0.2812" stop-color="#7b9188"/><stop offset="0.3125" stop-color="#7c9187"/><stop offset="0.3438" stop-color="#7c9187"/><stop offset="0.3750" stop-color="#7c9086"/><stop offset="0.4062" stop-color="#7b8f85"/><stop offset="0.4375" stop-color="#798e83"/><stop offset="0.4688" stop-color="#788d83"/><stop offset="0.5000" stop-color="#768c82"/><stop offset="0.5312" stop-color="#758c82"/><stop offset="0.5625" stop-color="#758c83"/><stop offset="0.5938" stop-color="#758d85"/><stop offset="0.6250" stop-color="#768f87"/><stop offset="0.6562" stop-color="#78928a"/><stop offset="0.6875" stop-color="#7b958d"/><stop offset="0.7188" stop-color="#7f9991"/><stop offset="0.7500" stop-color="#839d94"/><stop offset="0.7812" stop-color="#86a097"/><stop offset="0.8125" stop-color="#87a298"/><stop offset="0.8438" stop-color="#86a298"/><stop offset="0.8750" stop-color="#839e94"/><stop offset="0.9062" stop-color="#7f9b91"/><stop offset="0.9375" stop-color="#7c988e"/><stop offset="0.9688" stop-color="#769389"/><stop offset="1.0000" stop-color="#708e83"/></linearGradient><linearGradient id="r22" x1="0" y1="0" x2="736" y2="0" gradientUnits="userSpaceOnUse"><stop offset="0.0000" stop-color="#5f7a76"/><stop offset="0.0312" stop-color="#617c77"/><stop offset="0.0625" stop-color="#637e78"/><stop offset="0.0938" stop-color="#64807b"/><stop offset="0.1250" stop-color="#66837d"/><stop offset="0.1562" stop-color="#69857f"/><stop offset="0.1875" stop-color="#6d8781"/><stop offset="0.2188" stop-color="#708982"/><stop offset="0.2500" stop-color="#738b82"/><stop offset="0.2812" stop-color="#758c83"/><stop offset="0.3125" stop-color="#778c83"/><stop offset="0.3438" stop-color="#788c83"/><stop offset="0.3750" stop-color="#788c82"/><stop offset="0.4062" stop-color="#778b81"/><stop offset="0.4375" stop-color="#758a80"/><stop offset="0.4688" stop-color="#74897f"/><stop offset="0.5000" stop-color="#72887e"/><stop offset="0.5312" stop-color="#71877e"/><stop offset="0.5625" stop-color="#70877f"/><stop offset="0.5938" stop-color="#708880"/><stop offset="0.6250" stop-color="#718a83"/><stop offset="0.6562" stop-color="#738d85"/><stop offset="0.6875" stop-color="#769089"/><stop offset="0.7188" stop-color="#79948c"/><stop offset="0.7500" stop-color="#7c978f"/><stop offset="0.7812" stop-color="#7f9a92"/><stop offset="0.8125" stop-color="#809c93"/><stop offset="0.8438" stop-color="#7f9b92"/><stop offset="0.8750" stop-color="#7a978d"/><stop offset="0.9062" stop-color="#77938b"/><stop offset="0.9375" stop-color="#739088"/><stop offset="0.9688" stop-color="#6f8c84"/><stop offset="1.0000" stop-color="#6a887f"/></linearGradient><linearGradient id="r23" x1="0" y1="0" x2="736" y2="0" gradientUnits="userSpaceOnUse"><stop offset="0.0000" stop-color="#5d7872"/><stop offset="0.0312" stop-color="#5f7973"/><stop offset="0.0625" stop-color="#607a73"/><stop offset="0.0938" stop-color="#617b75"/><stop offset="0.1250" stop-color="#627d77"/><stop offset="0.1562" stop-color="#637e79"/><stop offset="0.1875" stop-color="#66807a"/><stop offset="0.2188" stop-color="#69827b"/><stop offset="0.2500" stop-color="#6d847c"/><stop offset="0.2812" stop-color="#6f867d"/><stop offset="0.3125" stop-color="#72877e"/><stop offset="0.3438" stop-color="#73877e"/><stop offset="0.3750" stop-color="#73877e"/><stop offset="0.4062" stop-color="#72867d"/><stop offset="0.4375" stop-color="#71857b"/><stop offset="0.4688" stop-color="#6f847a"/><stop offset="0.5000" stop-color="#6e837a"/><stop offset="0.5312" stop-color="#6c827a"/><stop offset="0.5625" stop-color="#6b827a"/><stop offset="0.5938" stop-color="#6b837c"/><stop offset="0.6250" stop-color="#6c847e"/><stop offset="0.6562" stop-color="#6d8780"/><stop offset="0.6875" stop-color="#708a83"/><stop offset="0.7188" stop-color="#738d86"/><stop offset="0.7500" stop-color="#769189"/><stop offset="0.7812" stop-color="#78938c"/><stop offset="0.8125" stop-color="#79958d"/><stop offset="0.8438" stop-color="#78948c"/><stop offset="0.8750" stop-color="#749088"/><stop offset="0.9062" stop-color="#708c85"/><stop offset="0.9375" stop-color="#6c8982"/><stop offset="0.9688" stop-color="#69857e"/><stop offset="1.0000" stop-color="#65827a"/></linearGradient><linearGradient id="r24" x1="0" y1="0" x2="736" y2="0" gradientUnits="userSpaceOnUse"><stop offset="0.0000" stop-color="#5b7570"/><stop offset="0.0312" stop-color="#5c7670"/><stop offset="0.0625" stop-color="#5d7670"/><stop offset="0.0938" stop-color="#5d7771"/><stop offset="0.1250" stop-color="#5d7772"/><stop offset="0.1562" stop-color="#5e7873"/><stop offset="0.1875" stop-color="#607973"/><stop offset="0.2188" stop-color="#637b75"/><stop offset="0.2500" stop-color="#667d76"/><stop offset="0.2812" stop-color="#697f78"/><stop offset="0.3125" stop-color="#6c8179"/><stop offset="0.3438" stop-color="#6e8279"/><stop offset="0.3750" stop-color="#6e8279"/><stop offset="0.4062" stop-color="#6d8178"/><stop offset="0.4375" stop-color="#6c8077"/><stop offset="0.4688" stop-color="#6a7f76"/><stop offset="0.5000" stop-color="#697d75"/><stop offset="0.5312" stop-color="#677d74"/><stop offset="0.5625" stop-color="#667c75"/><stop offset="0.5938" stop-color="#657d76"/><stop offset="0.6250" stop-color="#657e78"/><stop offset="0.6562" stop-color="#67807b"/><stop offset="0.6875" stop-color="#69837d"/><stop offset="0.7188" stop-color="#6c8680"/><stop offset="0.7500" stop-color="#6f8983"/><stop offset="0.7812" stop-color="#718c85"/><stop offset="0.8125" stop-color="#728d86"/><stop offset="0.8438" stop-color="#708c85"/><stop offset="0.8750" stop-color="#6d8982"/><stop offset="0.9062" stop-color="#6a857f"/><stop offset="0.9375" stop-color="#66827c"/><stop offset="0.9688" stop-color="#637f79"/><stop offset="1.0000" stop-color="#5f7c75"/></linearGradient><linearGradient id="r25" x1="0" y1="0" x2="736" y2="0" gradientUnits="userSpaceOnUse"><stop offset="0.0000" stop-color="#59736d"/><stop offset="0.0312" stop-color="#5a736d"/><stop offset="0.0625" stop-color="#5a746d"/><stop offset="0.0938" stop-color="#5a736e"/><stop offset="0.1250" stop-color="#59736d"/><stop offset="0.1562" stop-color="#59726d"/><stop offset="0.1875" stop-color="#5a726d"/><stop offset="0.2188" stop-color="#5c746f"/><stop offset="0.2500" stop-color="#607770"/><stop offset="0.2812" stop-color="#637972"/><stop offset="0.3125" stop-color="#667b73"/><stop offset="0.3438" stop-color="#687c74"/><stop offset="0.3750" stop-color="#687c74"/><stop offset="0.4062" stop-color="#687b73"/><stop offset="0.4375" stop-color="#667a72"/><stop offset="0.4688" stop-color="#657970"/><stop offset="0.5000" stop-color="#63786f"/><stop offset="0.5312" stop-color="#61766f"/><stop offset="0.5625" stop-color="#60766f"/><stop offset="0.5938" stop-color="#5f7670"/><stop offset="0.6250" stop-color="#5f7772"/><stop offset="0.6562" stop-color="#607974"/><stop offset="0.6875" stop-color="#627c77"/><stop offset="0.7188" stop-color="#657f7a"/><stop offset="0.7500" stop-color="#67817c"/><stop offset="0.7812" stop-color="#69847e"/><stop offset="0.8125" stop-color="#6a857f"/><stop offset="0.8438" stop-color="#69847e"/><stop offset="0.8750" stop-color="#67827b"/><stop offset="0.9062" stop-color="#647f79"/><stop offset="0.9375" stop-color="#607c76"/><stop offset="0.9688" stop-color="#5d7973"/><stop offset="1.0000" stop-color="#5a7670"/></linearGradient><linearGradient id="r26" x1="0" y1="0" x2="736" y2="0" gradientUnits="userSpaceOnUse"><stop offset="0.0000" stop-color="#57706b"/><stop offset="0.0312" stop-color="#57716b"/><stop offset="0.0625" stop-color="#57716b"/><stop offset="0.0938" stop-color="#57706b"/><stop offset="0.1250" stop-color="#556e6a"/><stop offset="0.1562" stop-color="#546c68"/><stop offset="0.1875" stop-color="#546c68"/><stop offset="0.2188" stop-color="#576e69"/><stop offset="0.2500" stop-color="#59706b"/><stop offset="0.2812" stop-color="#5c726c"/><stop offset="0.3125" stop-color="#5f746e"/><stop offset="0.3438" stop-color="#61756f"/><stop offset="0.3750" stop-color="#62766f"/><stop offset="0.4062" stop-color="#61756e"/><stop offset="0.4375" stop-color="#60746d"/><stop offset="0.4688" stop-color="#5f736b"/><stop offset="0.5000" stop-color="#5d716a"/><stop offset="0.5312" stop-color="#5b7069"/><stop offset="0.5625" stop-color="#5a6f69"/><stop offset="0.5938" stop-color="#586f69"/><stop offset="0.6250" stop-color="#58706b"/><stop offset="0.6562" stop-color="#59726d"/><stop offset="0.6875" stop-color="#5b7470"/><stop offset="0.7188" stop-color="#5d7772"/><stop offset="0.7500" stop-color="#607975"/><stop offset="0.7812" stop-color="#627b76"/><stop offset="0.8125" stop-color="#637d77"/><stop offset="0.8438" stop-color="#627c76"/><stop offset="0.8750" stop-color="#607a74"/><stop offset="0.9062" stop-color="#5e7872"/><stop offset="0.9375" stop-color="#5b7570"/><stop offset="0.9688" stop-color="#58736e"/><stop offset="1.0000" stop-color="#56706b"/></linearGradient><linearGradient id="r27" x1="0" y1="0" x2="736" y2="0" gradientUnits="userSpaceOnUse"><stop offset="0.0000" stop-color="#556d68"/><stop offset="0.0312" stop-color="#556e69"/><stop offset="0.0625" stop-color="#546d69"/><stop offset="0.0938" stop-color="#546c68"/><stop offset="0.1250" stop-color="#526a66"/><stop offset="0.1562" stop-color="#506864"/><stop offset="0.1875" stop-color="#506763"/><stop offset="0.2188" stop-color="#516864"/><stop offset="0.2500" stop-color="#536a65"/><stop offset="0.2812" stop-color="#566c67"/><stop offset="0.3125" stop-color="#596e68"/><stop offset="0.3438" stop-color="#5a6f69"/><stop offset="0.3750" stop-color="#5b6f69"/><stop offset="0.4062" stop-color="#5b6e69"/><stop offset="0.4375" stop-color="#5a6d68"/><stop offset="0.4688" stop-color="#586c66"/><stop offset="0.5000" stop-color="#576b64"/><stop offset="0.5312" stop-color="#556963"/><stop offset="0.5625" stop-color="#536862"/><stop offset="0.5938" stop-color="#526763"/><stop offset="0.6250" stop-color="#526864"/><stop offset="0.6562" stop-color="#526a66"/><stop offset="0.6875" stop-color="#546c69"/><stop offset="0.7188" stop-color="#576f6b"/><stop offset="0.7500" stop-color="#59716d"/><stop offset="0.7812" stop-color="#5a736f"/><stop offset="0.8125" stop-color="#5b746f"/><stop offset="0.8438" stop-color="#5b746e"/><stop offset="0.8750" stop-color="#5a736d"/><stop offset="0.9062" stop-color="#58716c"/><stop offset="0.9375" stop-color="#566f6a"/><stop offset="0.9688" stop-color="#546d68"/><stop offset="1.0000" stop-color="#526b66"/></linearGradient><linearGradient id="r28" x1="0" y1="0" x2="736" y2="0" gradientUnits="userSpaceOnUse"><stop offset="0.0000" stop-color="#526a66"/><stop offset="0.0312" stop-color="#526a66"/><stop offset="0.0625" stop-color="#526a66"/><stop offset="0.0938" stop-color="#516865"/><stop offset="0.1250" stop-color="#4f6663"/><stop offset="0.1562" stop-color="#4d6461"/><stop offset="0.1875" stop-color="#4b635f"/><stop offset="0.2188" stop-color="#4c635f"/><stop offset="0.2500" stop-color="#4e6460"/><stop offset="0.2812" stop-color="#506662"/><stop offset="0.3125" stop-color="#526763"/><stop offset="0.3438" stop-color="#546864"/><stop offset="0.3750" stop-color="#546864"/><stop offset="0.4062" stop-color="#546864"/><stop offset="0.4375" stop-color="#536762"/><stop offset="0.4688" stop-color="#526661"/><stop offset="0.5000" stop-color="#51645f"/><stop offset="0.5312" stop-color="#4f635e"/><stop offset="0.5625" stop-color="#4e615c"/><stop offset="0.5938" stop-color="#4c605c"/><stop offset="0.6250" stop-color="#4c615d"/><stop offset="0.6562" stop-color="#4c635f"/><stop offset="0.6875" stop-color="#4e6562"/><stop offset="0.7188" stop-color="#506764"/><stop offset="0.7500" stop-color="#526966"/><stop offset="0.7812" stop-color="#546b67"/><stop offset="0.8125" stop-color="#556d68"/><stop offset="0.8438" stop-color="#556d67"/><stop offset="0.8750" stop-color="#546c66"/><stop offset="0.9062" stop-color="#536b66"/><stop offset="0.9375" stop-color="#526965"/><stop offset="0.9688" stop-color="#506763"/><stop offset="1.0000" stop-color="#4e6561"/></linearGradient><linearGradient id="r29" x1="0" y1="0" x2="736" y2="0" gradientUnits="userSpaceOnUse"><stop offset="0.0000" stop-color="#506662"/><stop offset="0.0312" stop-color="#506663"/><stop offset="0.0625" stop-color="#4f6662"/><stop offset="0.0938" stop-color="#4d6461"/><stop offset="0.1250" stop-color="#4b625f"/><stop offset="0.1562" stop-color="#49605d"/><stop offset="0.1875" stop-color="#485e5c"/><stop offset="0.2188" stop-color="#485e5b"/><stop offset="0.2500" stop-color="#495f5c"/><stop offset="0.2812" stop-color="#4a605d"/><stop offset="0.3125" stop-color="#4c615e"/><stop offset="0.3438" stop-color="#4d625f"/><stop offset="0.3750" stop-color="#4e625f"/><stop offset="0.4062" stop-color="#4d615f"/><stop offset="0.4375" stop-color="#4d605d"/><stop offset="0.4688" stop-color="#4c5f5c"/><stop offset="0.5000" stop-color="#4b5e5a"/><stop offset="0.5312" stop-color="#495c58"/><stop offset="0.5625" stop-color="#485b57"/><stop offset="0.5938" stop-color="#475a56"/><stop offset="0.6250" stop-color="#465a56"/><stop offset="0.6562" stop-color="#475c58"/><stop offset="0.6875" stop-color="#485e5b"/><stop offset="0.7188" stop-color="#4a605d"/><stop offset="0.7500" stop-color="#4c625f"/><stop offset="0.7812" stop-color="#4d6460"/><stop offset="0.8125" stop-color="#4f6561"/><stop offset="0.8438" stop-color="#4f6661"/><stop offset="0.8750" stop-color="#4f6560"/><stop offset="0.9062" stop-color="#4e6460"/><stop offset="0.9375" stop-color="#4d635f"/><stop offset="0.9688" stop-color="#4b615e"/><stop offset="1.0000" stop-color="#4a605d"/></linearGradient><linearGradient id="r30" x1="0" y1="0" x2="736" y2="0" gradientUnits="userSpaceOnUse"><stop offset="0.0000" stop-color="#4e615e"/><stop offset="0.0312" stop-color="#4d615f"/><stop offset="0.0625" stop-color="#4c615e"/><stop offset="0.0938" stop-color="#4a5f5d"/><stop offset="0.1250" stop-color="#485e5b"/><stop offset="0.1562" stop-color="#455c59"/><stop offset="0.1875" stop-color="#445a58"/><stop offset="0.2188" stop-color="#435a57"/><stop offset="0.2500" stop-color="#445a58"/><stop offset="0.2812" stop-color="#455b58"/><stop offset="0.3125" stop-color="#465b59"/><stop offset="0.3438" stop-color="#475c5a"/><stop offset="0.3750" stop-color="#475c5a"/><stop offset="0.4062" stop-color="#475b5a"/><stop offset="0.4375" stop-color="#475a58"/><stop offset="0.4688" stop-color="#465957"/><stop offset="0.5000" stop-color="#455755"/><stop offset="0.5312" stop-color="#445653"/><stop offset="0.5625" stop-color="#435551"/><stop offset="0.5938" stop-color="#425451"/><stop offset="0.6250" stop-color="#415451"/><stop offset="0.6562" stop-color="#425553"/><stop offset="0.6875" stop-color="#435755"/><stop offset="0.7188" stop-color="#455957"/><stop offset="0.7500" stop-color="#465b58"/><stop offset="0.7812" stop-color="#485d59"/><stop offset="0.8125" stop-color="#495e5a"/><stop offset="0.8438" stop-color="#495f5a"/><stop offset="0.8750" stop-color="#4a5f5a"/><stop offset="0.9062" stop-color="#495e5a"/><stop offset="0.9375" stop-color="#485d5a"/><stop offset="0.9688" stop-color="#475c59"/><stop offset="1.0000" stop-color="#465a58"/></linearGradient><linearGradient id="r31" x1="0" y1="0" x2="736" y2="0" gradientUnits="userSpaceOnUse"><stop offset="0.0000" stop-color="#4b5c5b"/><stop offset="0.0312" stop-color="#4a5c5b"/><stop offset="0.0625" stop-color="#485c5a"/><stop offset="0.0938" stop-color="#475b59"/><stop offset="0.1250" stop-color="#445957"/><stop offset="0.1562" stop-color="#425756"/><stop offset="0.1875" stop-color="#405654"/><stop offset="0.2188" stop-color="#3f5553"/><stop offset="0.2500" stop-color="#405553"/><stop offset="0.2812" stop-color="#405554"/><stop offset="0.3125" stop-color="#415654"/><stop offset="0.3438" stop-color="#425655"/><stop offset="0.3750" stop-color="#425655"/><stop offset="0.4062" stop-color="#415554"/><stop offset="0.4375" stop-color="#415453"/><stop offset="0.4688" stop-color="#405351"/><stop offset="0.5000" stop-color="#405250"/><stop offset="0.5312" stop-color="#3f504e"/><stop offset="0.5625" stop-color="#3e4f4d"/><stop offset="0.5938" stop-color="#3d4e4c"/><stop offset="0.6250" stop-color="#3d4f4c"/><stop offset="0.6562" stop-color="#3d504d"/><stop offset="0.6875" stop-color="#3e514f"/><stop offset="0.7188" stop-color="#405351"/><stop offset="0.7500" stop-color="#415552"/><stop offset="0.7812" stop-color="#425653"/><stop offset="0.8125" stop-color="#435754"/><stop offset="0.8438" stop-color="#445855"/><stop offset="0.8750" stop-color="#445855"/><stop offset="0.9062" stop-color="#445855"/><stop offset="0.9375" stop-color="#445754"/><stop offset="0.9688" stop-color="#435654"/><stop offset="1.0000" stop-color="#425553"/></linearGradient><linearGradient id="r32" x1="0" y1="0" x2="736" y2="0" gradientUnits="userSpaceOnUse"><stop offset="0.0000" stop-color="#485857"/><stop offset="0.0312" stop-color="#475857"/><stop offset="0.0625" stop-color="#455756"/><stop offset="0.0938" stop-color="#435655"/><stop offset="0.1250" stop-color="#415553"/><stop offset="0.1562" stop-color="#3f5352"/><stop offset="0.1875" stop-color="#3d5251"/><stop offset="0.2188" stop-color="#3c5150"/><stop offset="0.2500" stop-color="#3c5050"/><stop offset="0.2812" stop-color="#3c5050"/><stop offset="0.3125" stop-color="#3c5050"/><stop offset="0.3438" stop-color="#3d5050"/><stop offset="0.3750" stop-color="#3d5050"/><stop offset="0.4062" stop-color="#3c4f4f"/><stop offset="0.4375" stop-color="#3c4e4e"/><stop offset="0.4688" stop-color="#3b4d4d"/><stop offset="0.5000" stop-color="#3a4c4b"/><stop offset="0.5312" stop-color="#3a4b49"/><stop offset="0.5625" stop-color="#394a48"/><stop offset="0.5938" stop-color="#384947"/><stop offset="0.6250" stop-color="#384947"/><stop offset="0.6562" stop-color="#394a48"/><stop offset="0.6875" stop-color="#3a4b4a"/><stop offset="0.7188" stop-color="#3b4d4b"/><stop offset="0.7500" stop-color="#3c4f4c"/><stop offset="0.7812" stop-color="#3d504e"/><stop offset="0.8125" stop-color="#3f514e"/><stop offset="0.8438" stop-color="#3f524f"/><stop offset="0.8750" stop-color="#40524f"/><stop offset="0.9062" stop-color="#40524f"/><stop offset="0.9375" stop-color="#3f524f"/><stop offset="0.9688" stop-color="#3f514f"/><stop offset="1.0000" stop-color="#3e504e"/></linearGradient><linearGradient id="r33" x1="0" y1="0" x2="736" y2="0" gradientUnits="userSpaceOnUse"><stop offset="0.0000" stop-color="#475655"/><stop offset="0.0312" stop-color="#465655"/><stop offset="0.0625" stop-color="#445554"/><stop offset="0.0938" stop-color="#425453"/><stop offset="0.1250" stop-color="#405352"/><stop offset="0.1562" stop-color="#3e5150"/><stop offset="0.1875" stop-color="#3c504f"/><stop offset="0.2188" stop-color="#3b4f4e"/><stop offset="0.2500" stop-color="#3a4f4e"/><stop offset="0.2812" stop-color="#3a4e4e"/><stop offset="0.3125" stop-color="#3b4e4e"/><stop offset="0.3438" stop-color="#3b4e4e"/><stop offset="0.3750" stop-color="#3b4e4e"/><stop offset="0.4062" stop-color="#3a4d4d"/><stop offset="0.4375" stop-color="#3a4c4c"/><stop offset="0.4688" stop-color="#394b4b"/><stop offset="0.5000" stop-color="#394a49"/><stop offset="0.5312" stop-color="#384947"/><stop offset="0.5625" stop-color="#374846"/><stop offset="0.5938" stop-color="#374746"/><stop offset="0.6250" stop-color="#374746"/><stop offset="0.6562" stop-color="#374846"/><stop offset="0.6875" stop-color="#384948"/><stop offset="0.7188" stop-color="#394b49"/><stop offset="0.7500" stop-color="#3a4c4a"/><stop offset="0.7812" stop-color="#3b4e4b"/><stop offset="0.8125" stop-color="#3d4f4c"/><stop offset="0.8438" stop-color="#3d4f4d"/><stop offset="0.8750" stop-color="#3e504d"/><stop offset="0.9062" stop-color="#3e504d"/><stop offset="0.9375" stop-color="#3e4f4d"/><stop offset="0.9688" stop-color="#3d4f4d"/><stop offset="1.0000" stop-color="#3c4e4d"/></linearGradient></defs><rect x="0" y="0" width="736" height="17.5" fill="url(#r0)"/><rect x="0" y="0" width="736" height="17" fill="url(#r1)" mask="url(#vm)"/><rect x="0" y="17" width="736" height="17.5" fill="url(#r1)"/><rect x="0" y="17" width="736" height="17" fill="url(#r2)" mask="url(#vm)"/><rect x="0" y="34" width="736" height="17.5" fill="url(#r2)"/><rect x="0" y="34" width="736" height="17" fill="url(#r3)" mask="url(#vm)"/><rect x="0" y="51" width="736" height="17.5" fill="url(#r3)"/><rect x="0" y="51" width="736" height="17" fill="url(#r4)" mask="url(#vm)"/><rect x="0" y="68" width="736" height="17.5" fill="url(#r4)"/><rect x="0" y="68" width="736" height="17" fill="url(#r5)" mask="url(#vm)"/><rect x="0" y="85" width="736" height="17.5" fill="url(#r5)"/><rect x="0" y="85" width="736" height="17" fill="url(#r6)" mask="url(#vm)"/><rect x="0" y="102" width="736" height="17.5" fill="url(#r6)"/><rect x="0" y="102" width="736" height="17" fill="url(#r7)" mask="url(#vm)"/><rect x="0" y="119" width="736" height="17.5" fill="url(#r7)"/><rect x="0" y="119" width="736" height="17" fill="url(#r8)" mask="url(#vm)"/><rect x="0" y="136" width="736" height="17.5" fill="url(#r8)"/><rect x="0" y="136" width="736" height="17" fill="url(#r9)" mask="url(#vm)"/><rect x="0" y="153" width="736" height="17.5" fill="url(#r9)"/><rect x="0" y="153" width="736" height="17" fill="url(#r10)" mask="url(#vm)"/><rect x="0" y="170" width="736" height="17.5" fill="url(#r10)"/><rect x="0" y="170" width="736" height="17" fill="url(#r11)" mask="url(#vm)"/><rect x="0" y="187" width="736" height="17.5" fill="url(#r11)"/><rect x="0" y="187" width="736" height="17" fill="url(#r12)" mask="url(#vm)"/><rect x="0" y="204" width="736" height="17.5" fill="url(#r12)"/><rect x="0" y="204" width="736" height="17" fill="url(#r13)" mask="url(#vm)"/><rect x="0" y="221" width="736" height="17.5" fill="url(#r13)"/><rect x="0" y="221" width="736" height="17" fill="url(#r14)" mask="url(#vm)"/><rect x="0" y="238" width="736" height="17.5" fill="url(#r14)"/><rect x="0" y="238" width="736" height="17" fill="url(#r15)" mask="url(#vm)"/><rect x="0" y="255" width="736" height="17.5" fill="url(#r15)"/><rect x="0" y="255" width="736" height="17" fill="url(#r16)" mask="url(#vm)"/><rect x="0" y="272" width="736" height="17.5" fill="url(#r16)"/><rect x="0" y="272" width="736" height="17" fill="url(#r17)" mask="url(#vm)"/><rect x="0" y="289" width="736" height="17.5" fill="url(#r17)"/><rect x="0" y="289" width="736" height="17" fill="url(#r18)" mask="url(#vm)"/><rect x="0" y="306" width="736" height="17.5" fill="url(#r18)"/><rect x="0" y="306" width="736" height="17" fill="url(#r19)" mask="url(#vm)"/><rect x="0" y="323" width="736" height="17.5" fill="url(#r19)"/><rect x="0" y="323" width="736" height="17" fill="url(#r20)" mask="url(#vm)"/><rect x="0" y="340" width="736" height="17.5" fill="url(#r20)"/><rect x="0" y="340" width="736" height="17" fill="url(#r21)" mask="url(#vm)"/><rect x="0" y="357" width="736" height="17.5" fill="url(#r21)"/><rect x="0" y="357" width="736" height="17" fill="url(#r22)" mask="url(#vm)"/><rect x="0" y="374" width="736" height="17.5" fill="url(#r22)"/><rect x="0" y="374" width="736" height="17" fill="url(#r23)" mask="url(#vm)"/><rect x="0" y="391" width="736" height="17.5" fill="url(#r23)"/><rect x="0" y="391" width="736" height="17" fill="url(#r24)" mask="url(#vm)"/><rect x="0" y="408" width="736" height="17.5" fill="url(#r24)"/><rect x="0" y="408" width="736" height="17" fill="url(#r25)" mask="url(#vm)"/><rect x="0" y="425" width="736" height="17.5" fill="url(#r25)"/><rect x="0" y="425" width="736" height="17" fill="url(#r26)" mask="url(#vm)"/><rect x="0" y="442" width="736" height="17.5" fill="url(#r26)"/><rect x="0" y="442" width="736" height="17" fill="url(#r27)" mask="url(#vm)"/><rect x="0" y="459" width="736" height="17.5" fill="url(#r27)"/><rect x="0" y="459" width="736" height="17" fill="url(#r28)" mask="url(#vm)"/><rect x="0" y="476" width="736" height="17.5" fill="url(#r28)"/><rect x="0" y="476" width="736" height="17" fill="url(#r29)" mask="url(#vm)"/><rect x="0" y="493" width="736" height="17.5" fill="url(#r29)"/><rect x="0" y="493" width="736" height="17" fill="url(#r30)" mask="url(#vm)"/><rect x="0" y="510" width="736" height="17.5" fill="url(#r30)"/><rect x="0" y="510" width="736" height="17" fill="url(#r31)" mask="url(#vm)"/><rect x="0" y="527" width="736" height="17.5" fill="url(#r31)"/><rect x="0" y="527" width="736" height="17" fill="url(#r32)" mask="url(#vm)"/><rect x="0" y="544" width="736" height="17.5" fill="url(#r32)"/><rect x="0" y="544" width="736" height="17" fill="url(#r33)" mask="url(#vm)"/>
  <!-- left swoosh -->
  <path d="M-10 228 C 40 222, 90 208, 140 190 L 140 206 C 90 222, 40 236, -10 242 Z" fill="#a8c0b8" opacity="0.08" filter="url(#b1)"/>
  <path d="M-20 285 L0 275 C11.7 269.2, 35.0 258.7, 50 250 C65.0 241.3, 76.7 231.3, 90 223 C103.3 214.7, 120.0 205.8, 130 200 L150 188" fill="none" stroke="#88a69c" stroke-width="11" filter="url(#b1)"/>
  <!-- band A -->
  <linearGradient id="bag" x1="0" y1="116" x2="0" y2="300" gradientUnits="userSpaceOnUse"><stop offset="0" stop-color="#8aa8a4" stop-opacity="0"/><stop offset="0.12" stop-color="#8aa8a4" stop-opacity="0.55"/><stop offset="0.7" stop-color="#a0b8b0" stop-opacity="0.45"/><stop offset="1" stop-color="#a0b8b0" stop-opacity="0"/></linearGradient>
  <path d="M692 116 C 694 150, 696 200, 692 236 C 689 258, 684 280, 668 310" fill="none" stroke="url(#bag)" stroke-width="2.4" filter="url(#b1)"/>
  <path d="M692 150 C 692 190, 688 215, 675 240 C 662 275, 640 330, 600 385 L 632 392 C 660 360, 680 320, 688 295 C 696 260, 698 220, 695 150 Z" fill="#b4c8bc" opacity="0.16" filter="url(#b1)"/>
  <!-- crescent -->
  <defs>
    <linearGradient id="cm" x1="0" y1="0" x2="0" y2="551" gradientUnits="userSpaceOnUse">
      <stop offset="0.42" stop-color="#fff" stop-opacity="0"/>
      <stop offset="0.52" stop-color="#fff" stop-opacity="1"/>
    </linearGradient>
    <linearGradient id="cg" x1="410" y1="0" x2="736" y2="0" gradientUnits="userSpaceOnUse"><stop offset="0" stop-color="#7a9084"/><stop offset="0.3" stop-color="#82988a"/><stop offset="0.58" stop-color="#86a08e"/><stop offset="0.75" stop-color="#90aa9a"/><stop offset="1" stop-color="#96b0a0"/></linearGradient>
    <mask id="cmask"><rect x="0" y="0" width="736" height="551" fill="url(#cm)"/></mask>
  </defs>
  <g mask="url(#cmask)">
  <path fill-rule="evenodd" fill="url(#cg)" filter="url(#b1)" d="M 320.2 230.5 A 219.9 219.9 0 1 0 760.0 230.5 A 219.9 219.9 0 1 0 320.2 230.5 Z M 352.6 217.6 A 199.7 199.7 0 1 0 752.0 217.6 A 199.7 199.7 0 1 0 352.6 217.6 Z"/>
  </g>
  <circle cx="734" cy="466" r="8.5" fill="#6c8882" filter="url(#b1)"/>
</svg>
<!-- desktop icon -->
<svg class="abs" style="left:31px;top:9px" width="25" height="33" viewBox="0 0 25 33">
  <defs>
    <linearGradient id="tg" x1="0" x2="1"><stop offset="0" stop-color="#7c8288"/><stop offset="0.2" stop-color="#c8ccd0"/><stop offset="0.5" stop-color="#f8f9fa"/><stop offset="0.75" stop-color="#e0e3e6"/><stop offset="1" stop-color="#8c9298"/></linearGradient>
    <linearGradient id="tl" x1="0" x2="0" y1="0" y2="1"><stop offset="0" stop-color="#c4c8cc"/><stop offset="1" stop-color="#eceef0"/></linearGradient>
  </defs>
  <path d="M2.4 5 L2.8 28.5 Q12.5 32.6 22.2 28.5 L22.6 5 Z" fill="url(#tg)"/>
  <ellipse cx="12.5" cy="4.6" rx="10.4" ry="3.3" fill="url(#tl)" stroke="#5c6066" stroke-width="0.7"/><path d="M2.4 7.2 Q12.5 10.6 22.6 7.2" fill="none" stroke="#70767c" stroke-width="0.6"/>
  <path d="M3 28.5 Q12.5 32.6 22 28.5" fill="none" stroke="#6a6e74" stroke-width="0.8"/>
  <circle cx="20.5" cy="29.5" r="1.6" fill="#2a2a2a"/>
</svg>
<div class="abs" id="lixo">Lixo</div>

<!-- terminal window -->
<div class="abs" id="win"></div>
<div class="abs" id="title"></div>
<svg class="abs" style="left:133px;top:121px" width="11" height="11" viewBox="0 0 11 11">
  <path d="M1.5 1.2 L9.8 0.6 L9.8 5.8 L1.5 5.8 Z" fill="#0c0c0c"/>
  <rect x="1" y="6.2" width="9.5" height="1.6" fill="#d4d4d4"/>
  <path d="M4.2 7.8 L5.75 5.9 L7.3 7.8 L7.6 9.8 L3.9 9.8 Z" fill="#e6e6e6"/>
</svg>
<div class="abs" id="ttext">marcelo@surface: ~</div>
<div class="abs" style="left:570px;top:127px;width:5px;height:2px;background:#e8e8e8"></div>
<div class="abs" style="left:582px;top:124px;width:3px;height:2.5px;border:1.3px solid #e4e4e4;background:#1a1a1a;border-top-width:1.8px"></div>
<svg class="abs" style="left:594px;top:123.5px" width="7" height="6" viewBox="0 0 7 6"><path d="M1 0.8 L6 5.2 M6 0.8 L1 5.2" stroke="#ececec" stroke-width="1.6"/></svg>
<div class="abs" id="menubar"></div>
<div class="abs mi" style="left:137px"><u>F</u>icheiro</div>
<div class="abs mi" style="left:183px"><u>E</u>ditar</div>
<div class="abs mi" style="left:220px"><u>S</u>eparadores</div>
<div class="abs mi" style="left:288.5px"><u>A</u>juda</div>
<div class="abs" id="term"></div>
<div class="abs" id="tt">marcelo@surface:~$ su
Senha:
root@surface:/home/marcelo# apt-get install dnsutils</div>
<div class="abs" style="left:431px;top:174.2px;width:6px;height:10.8px;background:#b0aeac"></div>
<div class="abs" id="sbth"></div>
<div class="abs sbb" style="top:152px"><svg width="11" height="10" viewBox="0 0 11 10"><path d="M3 6.6 L5.5 4.2 L8 6.6" fill="none" stroke="#a0a0a0" stroke-width="1"/></svg></div>
<div class="abs sbb" style="top:402px"><svg width="11" height="11" viewBox="0 0 11 11"><path d="M3 3.2 L5.5 5.4 L8 3.2" fill="none" stroke="#a0a0a0" stroke-width="1"/></svg></div>
<div class="abs" style="left:596.5px;top:279px;width:3.5px;height:1px;background:#6e8cbc"></div><div class="abs" style="left:596.5px;top:281px;width:3.5px;height:1px;background:#7896c4"></div><div class="abs" style="left:596.5px;top:283px;width:3.5px;height:1px;background:#7896c4"></div>

<!-- I-beam mouse cursor -->
<svg class="abs" style="left:541px;top:245px" width="7" height="15" viewBox="0 0 7 15">
  <path d="M1 1 H6 V3.2 H4.7 V11.6 H6 V14 H1 V11.6 H2.2 V3.2 H1 Z" fill="#b4b4b4" stroke="#1a1a1a" stroke-width="0.5"/>
</svg>
<div class="abs" style="left:492px;top:115.6px;width:12px;height:2.4px;border-radius:50%;background:#dfe8e6;opacity:0.85"></div>
<div class="abs" style="left:505px;top:115.5px;width:9px;height:2.5px;border-radius:50%;background:#a8c4c0;opacity:0.5"></div>
<!-- panel -->
<div class="abs" id="panel"></div>
<!-- lxde logo -->
<svg class="abs" style="left:0;top:532px" width="26" height="19" viewBox="0 0 26 19">
  <defs><linearGradient id="lg1" x1="0" y1="0" x2="0" y2="1"><stop offset="0" stop-color="#f0f0f0"/><stop offset="1" stop-color="#9a9a9a"/></linearGradient></defs>
  <path d="M16.2 1.6 Q17.6 1.2 18.2 2.6 L22.8 16.6 L21.6 16.8 L16.4 5.6 Z" fill="url(#lg1)"/>
  <path d="M16.6 2.2 Q10 6 3.2 11.6 L4 12 Q10 8.5 16.4 5.6 Z" fill="#b8b8b8" opacity="0.9"/>
  <path d="M15.8 4.6 Q11 8.8 6.2 14.4 L7 14.6 Q11.5 10.6 16.2 6.2 Z" fill="#a8a8a8" opacity="0.85"/>
  <path d="M15.6 6 Q12 10.5 8.2 16 L9 16.2 Q12.6 12 16 7.4 Z" fill="#9a9a9a" opacity="0.8"/>
</svg>
<!-- icon 2 -->
<svg class="abs" style="left:28px;top:533px" width="14" height="17" viewBox="0 0 14 17">
  <defs><linearGradient id="ic2" x1="0" y1="0" x2="0" y2="1"><stop offset="0" stop-color="#3a3a3a" stop-opacity="0.3"/><stop offset="1" stop-color="#1a1a1a"/></linearGradient></defs>
  <rect x="1" y="1.5" width="12" height="6" rx="1" fill="url(#ic2)"/>
  <path d="M2.6 7.2 L9.2 7 L10.8 9 L10.8 11 L2.6 11 Z" fill="#f2f2f2"/>
  <rect x="1.2" y="11" width="11.6" height="4.6" rx="1" fill="#0c0c0c"/>
</svg>
<!-- globe -->
<svg class="abs" style="left:45px;top:533px" width="17" height="17" viewBox="0 0 17 17">
  <defs><radialGradient id="gl" cx="0.52" cy="0.45" r="0.55"><stop offset="0" stop-color="#dce8f6"/><stop offset="0.45" stop-color="#a4c2e6"/><stop offset="0.8" stop-color="#4a78b8"/><stop offset="1" stop-color="#1c3a7a"/></radialGradient></defs>
  <circle cx="8.4" cy="8.4" r="7.4" fill="url(#gl)"/>
  <path d="M3 5 Q5 3.5 6.5 4.5 Q6 6.5 4 7.5 Z M10 2.5 Q12.5 3 13 5 Q11 5.5 10 4 Z M3.5 10 Q5 9.5 6 11.5 Q5.5 13.5 4.5 13 Z M9.5 12 Q12 11 13.5 11.5 Q12 14 10 14 Z" fill="#3a64a8" opacity="0.75"/>
  <path d="M6.5 3.5 Q9 4 8.5 6.5 Q10.5 8 9.5 10 Q7 9.5 6.5 7 Z" fill="#f0f6fc" opacity="0.55"/>
</svg>
<!-- windows icon -->
<svg class="abs" style="left:67px;top:534px" width="17" height="15" viewBox="0 0 17 15">
  <rect x="1.3" y="1.5" width="10.4" height="9.6" fill="#e6e6e6" stroke="#9a9a9a" stroke-width="0.5"/>
  <rect x="1.3" y="1.3" width="10.4" height="1.6" fill="#4a7ac0"/>
  <rect x="5.6" y="4.4" width="10" height="9.4" fill="#ececec" stroke="#9a9a9a" stroke-width="0.5"/>
  <rect x="12" y="4.2" width="3.6" height="1.6" fill="#4a7ac0"/>
</svg>
<!-- pager -->
<div class="abs" style="left:88px;top:534px;width:21.5px;height:15.5px;background:#4a78b6"></div>
<div class="abs" style="left:91.6px;top:537px;width:14.4px;height:9.2px;background:#d6e6f8"></div>
<div class="abs" style="left:110px;top:534px;width:20.6px;height:15.5px;background:#a6a6a6"></div>
<!-- task button -->
<div class="abs" id="task"></div>
<svg class="abs" style="left:138.5px;top:536px" width="13" height="10" viewBox="0 0 13 10">
  <defs><linearGradient id="tic" x1="0" y1="0" x2="1" y2="1"><stop offset="0" stop-color="#111"/><stop offset="0.5" stop-color="#3a3a3a"/><stop offset="0.55" stop-color="#111"/><stop offset="1" stop-color="#222"/></linearGradient></defs>
  <rect x="0.8" y="0.8" width="11.4" height="7.2" rx="0.8" fill="url(#tic)"/>
  <rect x="3.5" y="8.4" width="6" height="1" fill="#b0b0b0"/>
</svg>
<div class="abs" id="tasktext">marcelo@surfac...</div>
<!-- tray -->
<div class="abs" style="left:563px;top:534px;width:26px;height:15px;background:#000"></div>
<svg class="abs" style="left:590px;top:535px" width="14" height="14" viewBox="0 0 14 14">
  <path d="M1.5 5 L4 5 L8 1.5 L8 12.5 L4 9 L1.5 9 Z" fill="#050505"/>
  <path d="M10 4.5 Q11.5 7 10 9.5" fill="none" stroke="#151515" stroke-width="0.8"/>
</svg>
<div class="abs" id="pt">PT</div>
<svg class="abs" style="left:628px;top:535px" width="16" height="14" viewBox="0 0 16 14">
  <rect x="1" y="1.2" width="13.5" height="11" fill="#1a1a1a" stroke="#8a8a8a" stroke-width="0.9"/>
  <rect x="2" y="2.2" width="11.5" height="3" fill="#5a5a5a" opacity="0.6"/>
  <path d="M5.5 8.5 L9 6.5 L14.5 10.5 L12.5 12.8 Z" fill="#f0f0f0"/>
  <rect x="1.5" y="8.6" width="4.5" height="1.2" fill="#c8c8c8"/>
</svg>
<svg class="abs" style="left:647px;top:534px" width="17" height="16" viewBox="0 0 17 16">
  <rect x="0.6" y="1.4" width="10.4" height="13" rx="0.6" fill="#b08a60"/>
  <rect x="3.5" y="0.4" width="4.6" height="2" fill="#d8d8d8"/>
  <rect x="7.6" y="5.4" width="8.2" height="9.6" fill="#f4f4f4" stroke="#a0a0a0" stroke-width="0.5"/>
  <path d="M9 7.5 H14.4 M9 9.3 H14.4 M9 11.1 H14.4 M9 12.9 H13" stroke="#9a9a9a" stroke-width="0.5"/>
</svg>
<div class="abs" id="clock">19:05</div>
<svg class="abs" style="left:698.5px;top:534px" width="16" height="15" viewBox="0 0 16 15">
  <rect x="0.6" y="0.8" width="14.6" height="9.8" fill="#c4c4cc"/>
  <rect x="1.6" y="1.8" width="12.6" height="7.8" fill="#5a5e80"/>
  <path d="M6 9 L7.8 5.6 L9.6 9 Z" fill="#e08040"/>
  <path d="M3 8 L5 4 M11 8 L13 3" stroke="#8ab0e0" stroke-width="0.8"/>
  <rect x="6" y="10.6" width="4" height="2.4" fill="#d8d8d8"/>
  <rect x="3.6" y="12.8" width="8.6" height="1.4" fill="#eeeeee"/>
</svg>
<svg class="abs" style="left:719.5px;top:535px" width="13" height="13" viewBox="0 0 13 13">
  <rect x="0.4" y="0.2" width="12.2" height="12.4" fill="#e01c1c"/>
  <path d="M4.2 3.8 A3.6 3.6 0 1 0 8.8 3.8" fill="none" stroke="#fff" stroke-width="1.5"/>
  <path d="M6.5 2 V6.4" stroke="#fff" stroke-width="1.5"/>
</svg>

</body></html>
